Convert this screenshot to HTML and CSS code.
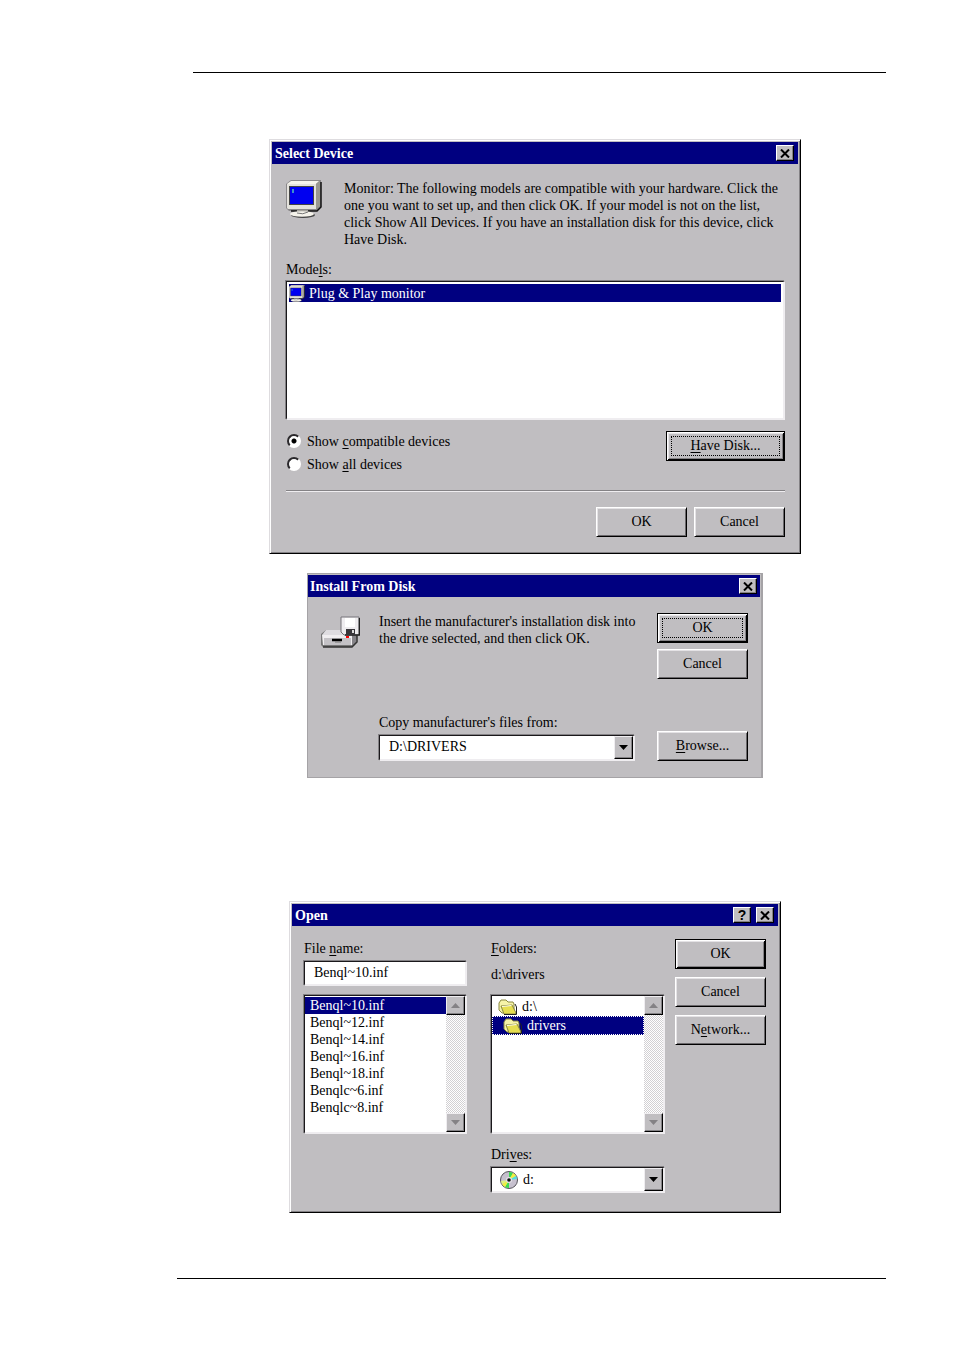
FILE: index.html
```html
<!DOCTYPE html>
<html lang="en">

<head>
    <meta charset="UTF-8">
    <meta name="viewport" content="width=device-width, initial-scale=1">
    <title>Installing the monitor driver</title>
    <link rel="stylesheet" href="styles.css">
</head>

<body>
    <!-- shared icon shapes -->
    <svg class="sprite" aria-hidden="true">
        <symbol id="icon-monitor" viewBox="0 0 36 38">
            <path d="M5 0H35V27L31 31H3L0 28V4Z" fill="#8a888a"/>
            <path d="M5 1H33L30 4H1Z" fill="#f6f4ec"/>
            <path d="M30 4L34 1V26L30 29Z" fill="#9a9890"/>
            <path d="M35 2V27L31 31H5" fill="none" stroke="#111" stroke-width="1.5"/>
            <path d="M1 4H30V29H2L1 28Z" fill="#e4e2dc"/>
            <path d="M3 6H28V25H3Z" fill="#444"/>
            <path d="M4 7H27V24H4Z" fill="#0000f0"/>
            <path d="M7 9V13" stroke="#4fc0c0" stroke-width="1.5"/>
            <path d="M11 30H22V33H11Z" fill="#a4a29c"/>
            <ellipse cx="17" cy="35" rx="12" ry="3" fill="#444"/>
            <ellipse cx="16" cy="34" rx="12" ry="2.8" fill="#f4f2ea"/>
            <path d="M11 33Q17 35 22 32" fill="none" stroke="#777"/>
        </symbol>
        <symbol id="icon-close" viewBox="0 0 10 9">
            <path d="M1 0.5L9 8.5M9 0.5L1 8.5" stroke="#000" stroke-width="2"/>
        </symbol>
        <symbol id="icon-down" viewBox="0 0 9 5">
            <path d="M0 0H9L4.5 5Z" fill="currentColor"/>
        </symbol>
        <symbol id="icon-up" viewBox="0 0 9 5">
            <path d="M0 5H9L4.5 0Z" fill="currentColor"/>
        </symbol>
        <symbol id="icon-folder" viewBox="0 0 20 16">
            <path d="M1 4L3 1H8L10 3H15L16 5V14H4L1 11Z" fill="#f6f3a8" stroke="#8a8840"/>
            <path d="M3 7L14 6L18 14L17 15H6Z" fill="#e6de50" stroke="#8a8840"/>
            <path d="M4 7.5L13.500 6.500" stroke="#fffff0"/>
            <path d="M17 5L18.500 8V15.500H6" fill="none" stroke="#222"/>
        </symbol>
    </svg>

    <header class="page-rule page-rule-top"></header>

    <main class="page">
        <section class="dialog dialog-device" aria-labelledby="deviceTitle">
            <div class="title-bar">
                <h2 id="deviceTitle">Select Device</h2>
                <button class="caption-button" type="button" aria-label="Close"><svg><use href="#icon-close"/></svg></button>
            </div>
            <form class="dialog-body device-body">
                <div class="intro">
                    <svg class="monitor-icon"><use href="#icon-monitor"/></svg>
                    <p>Monitor: The following models are compatible with your hardware. Click the one you want to set up, and then click OK. If your model is not on the list, click Show All Devices. If you have an installation disk for this device, click Have Disk.</p>
                </div>
                <div class="field">
                    <span class="label" id="modelsLabel">Mode<u>l</u>s:</span>
                    <ul class="list-box sunken" role="listbox" aria-labelledby="modelsLabel">
                        <li class="model selected" role="option" aria-selected="true">
                            <svg class="small-monitor"><use href="#icon-monitor"/></svg>Plug &amp; Play monitor
                        </li>
                    </ul>
                </div>
                <div class="choices">
                    <div class="radios">
                        <label><input type="radio" name="show" checked>Show <u>c</u>ompatible devices</label>
                        <label><input type="radio" name="show">Show <u>a</u>ll devices</label>
                    </div>
                    <button class="button default focused wide" type="button"><u>H</u>ave Disk...</button>
                </div>
                <hr class="divider">
                <div class="button-row">
                    <button class="button" type="button">OK</button>
                    <button class="button" type="button">Cancel</button>
                </div>
            </form>
        </section>

        <section class="dialog dialog-install" aria-labelledby="installTitle">
            <div class="title-bar">
                <h2 id="installTitle">Install From Disk</h2>
                <button class="caption-button" type="button" aria-label="Close"><svg><use href="#icon-close"/></svg></button>
            </div>
            <form class="dialog-body install-body">
                <svg class="drive-icon" viewBox="0 0 39 32">
                    <path d="M5 14H37L35 27L31 31H2L0 29V18Z" fill="#777"/>
                    <path d="M5 14H32L29 19H1Z" fill="#dedce0"/>
                    <path d="M1 19H31V29H2Z" fill="#f0eef0"/>
                    <path d="M3 22H30V29H3Z" fill="#c4c2c6"/>
                    <path d="M31 19L35 15V26L31 30Z" fill="#858388"/>
                    <path d="M2 31H31L36 26V18" fill="none" stroke="#333" stroke-width="1.5"/>
                    <path d="M11 24H21" stroke="#000" stroke-width="2.500"/>
                    <path d="M14 26H20" stroke="#777"/>
                    <path d="M21 1H38V19H23L20 16V1Z" fill="#eeecef" stroke="#77757a"/>
                    <path d="M38.500 2V19H24" fill="none" stroke="#222" stroke-width="1.500"/>
                    <path d="M24 2H34V11H24Z" fill="#fff"/>
                    <path d="M25 13H34V19H25Z" fill="#38363a"/>
                    <path d="M31 14H33V17H31Z" fill="#ddd"/>
                    <path d="M25 20H28V22H25Z" fill="#f00"/>
                </svg>
                <div class="install-main">
                    <p>Insert the manufacturer's installation disk into the drive selected, and then click OK.</p>
                    <div class="field">
                        <label class="label" for="copyFrom">Copy manufacturer's files from:</label>
                        <div class="combo sunken">
                            <select id="copyFrom"><option>D:\DRIVERS</option></select>
                            <span class="arrow"><svg><use href="#icon-down"/></svg></span>
                        </div>
                    </div>
                </div>
                <div class="button-column">
                    <button class="button default focused" type="button">OK</button>
                    <button class="button" type="button">Cancel</button>
                    <button class="button last" type="button"><u>B</u>rowse...</button>
                </div>
            </form>
        </section>

        <section class="dialog dialog-open" aria-labelledby="openTitle">
            <div class="title-bar">
                <h2 id="openTitle">Open</h2>
                <button class="caption-button help" type="button" aria-label="Help">?</button>
                <button class="caption-button" type="button" aria-label="Close"><svg><use href="#icon-close"/></svg></button>
            </div>
            <form class="dialog-body open-body">
                <div class="file-column">
                    <label class="label" for="fileName">File <u>n</u>ame:</label>
                    <input class="text-box sunken" id="fileName" type="text" value="Benql~10.inf">
                    <div class="scroll-list sunken">
                        <ul role="listbox" aria-label="Files">
                            <li class="selected" role="option" aria-selected="true">Benql~10.inf</li>
                            <li role="option">Benql~12.inf</li>
                            <li role="option">Benql~14.inf</li>
                            <li role="option">Benql~16.inf</li>
                            <li role="option">Benql~18.inf</li>
                            <li role="option">Benqlc~6.inf</li>
                            <li role="option">Benqlc~8.inf</li>
                        </ul>
                        <div class="scrollbar">
                            <button class="arrow" type="button" aria-label="Scroll up" disabled><svg><use href="#icon-up"/></svg></button>
                            <button class="arrow" type="button" aria-label="Scroll down" disabled><svg><use href="#icon-down"/></svg></button>
                        </div>
                    </div>
                </div>
                <div class="folder-column">
                    <span class="label" id="foldersLabel"><u>F</u>olders:</span>
                    <span class="label current-folder">d:\drivers</span>
                    <div class="scroll-list sunken">
                        <ul class="folders" role="listbox" aria-labelledby="foldersLabel">
                            <li role="option"><svg><use href="#icon-folder"/></svg>d:\</li>
                            <li class="selected nested" role="option" aria-selected="true"><svg><use href="#icon-folder"/></svg>drivers</li>
                        </ul>
                        <div class="scrollbar">
                            <button class="arrow" type="button" aria-label="Scroll up" disabled><svg><use href="#icon-up"/></svg></button>
                            <button class="arrow" type="button" aria-label="Scroll down" disabled><svg><use href="#icon-down"/></svg></button>
                        </div>
                    </div>
                    <label class="label drives-label" for="drives">Dri<u>v</u>es:</label>
                    <div class="combo sunken">
                        <svg class="disc-icon" viewBox="0 0 18 18">
                            <circle cx="9" cy="9" r="8.500" fill="#c6c0ce" stroke="#55535a"/>
                            <path d="M9 9L9 1A8 8 0 0 1 13 2Z" fill="#3cdc50"/>
                            <path d="M9 9L13 2A8 8 0 0 1 16 5Z" fill="#f0f040"/>
                            <path d="M9 9L16 5A8 8 0 0 1 17 8Z" fill="#50e0e0"/>
                            <path d="M9 9L9 17A8 8 0 0 1 5 16Z" fill="#3cdc50"/>
                            <path d="M9 9L5 16A8 8 0 0 1 2 13Z" fill="#f0f040"/>
                            <path d="M9 9L2 13A8 8 0 0 1 1 10Z" fill="#dff080"/>
                            <circle cx="9" cy="9" r="3" fill="#e4e0e8"/>
                            <circle cx="9" cy="9" r="1.800" fill="#111"/>
                        </svg>
                        <select id="drives"><option>d:</option></select>
                        <span class="arrow"><svg><use href="#icon-down"/></svg></span>
                    </div>
                </div>
                <div class="button-column">
                    <button class="button default" type="button">OK</button>
                    <button class="button" type="button">Cancel</button>
                    <button class="button" type="button">N<u>e</u>twork...</button>
                </div>
            </form>
        </section>
    </main>

    <footer class="page-rule page-rule-bottom"></footer>
</body>

</html>
```
FILE: styles.css
```css
* {
    box-sizing: border-box;
}

body {
    margin: 0;
    padding: 72px 68px 70px 177px;
    background: #fff;
    color: #000;
    font: 14px/17px "Liberation Serif", "Times New Roman", serif;
}

h2,
p,
ul {
    margin: 0;
    padding: 0;
}

ul {
    list-style: none;
}

u {
    text-underline-offset: 2px;
}

button,
input,
select {
    font: inherit;
    color: inherit;
}

.sprite {
    display: none;
}

.page-rule {
    border-top: 1px solid #000;
}

.page-rule-top {
    margin-left: 16px;
}

.page {
    display: flex;
    flex-direction: column;
    align-items: center;
    padding: 66px 0 65px 7px;
}

/* Windows */
.dialog {
    width: 100%;
    background: #c0bec1;
    border: 1px solid #dedcdf;
    border-right-color: #000;
    border-bottom-color: #000;
    box-shadow: inset 1px 1px #fff, inset -1px -1px #848285;
    padding: 2px;
}

.dialog-device {
    max-width: 532px;
}

.dialog-install {
    max-width: 456px;
    margin-top: 19px;
    padding: 1px 2px 1px 0;
    border-color: #a5a3a6;
    box-shadow: inset -1px 0 #a5a3a6;
}

.dialog-open {
    max-width: 492px;
    margin-top: 123px;
}

.title-bar {
    display: flex;
    align-items: center;
    gap: 5px;
    height: 22px;
    padding: 0 4px 0 3px;
    background: #000080;
    color: #fff;
}

.title-bar h2 {
    flex: 1;
    font-size: 14px;
    line-height: 17px;
}

.dialog-install .title-bar {
    padding: 0 3px 0 2px;
}

.caption-button {
    display: flex;
    align-items: center;
    justify-content: center;
    width: 18px;
    height: 16px;
    padding: 0;
    background: #c0bec1;
    border: 1px solid #fff;
    border-right-color: #000;
    border-bottom-color: #000;
    box-shadow: inset -1px -1px #848285;
    color: #000;
}

.caption-button svg {
    width: 10px;
    height: 9px;
}

.caption-button.help {
    font: bold 14px/14px "Liberation Sans", Arial, sans-serif;
}

/* Controls */
.label {
    display: block;
}

.sunken {
    background: #fff;
    border: 1px solid #1a181b;
    border-right: 2px solid #efedf0;
    border-bottom: 2px solid #efedf0;
    box-shadow: -1px -1px #848285;
}

.button {
    width: 91px;
    height: 30px;
    padding: 0 0 2px;
    background: #c0bec1;
    border: 1px solid #fff;
    border-right-color: #000;
    border-bottom-color: #000;
    box-shadow: inset 1px 1px #e4e2e5, inset -1px -1px #6a686b;
}

.button.wide {
    width: 119px;
}

.button.default {
    border-color: #000;
    box-shadow: inset 1px 1px #fff, inset -1px -1px #000, inset 2px 2px #e4e2e5, inset -2px -2px #848285;
}

.button.focused {
    outline: 1px dotted #000;
    outline-offset: -6px;
}

.selected {
    background: #000080;
    color: #fff;
}

.arrow {
    display: flex;
    align-items: center;
    justify-content: center;
    width: 19px;
    padding: 0;
    background: #c0bec1;
    border: 1px solid #efedf0;
    border-right-color: #000;
    border-bottom-color: #000;
    box-shadow: inset -1px -1px #848285;
    color: #000;
}

.arrow svg {
    width: 9px;
    height: 5px;
}

.arrow:disabled {
    color: #848285;
}

.combo {
    position: relative;
    display: flex;
    height: 26px;
}

.combo select {
    flex: 1;
    appearance: none;
    padding: 0 27px 3px 9px;
    background: transparent;
    border: 0;
    border-radius: 0;
}

.combo .arrow {
    position: absolute;
    top: 0;
    right: 0;
    bottom: 0;
    pointer-events: none;
}

/* Select Device */
.device-body {
    padding: 16px 13px 14px 14px;
}

.intro {
    display: flex;
    gap: 22px;
}

.monitor-icon {
    flex: none;
    width: 36px;
    height: 38px;
}

.device-body .field {
    margin-top: 13px;
}

.list-box {
    height: 139px;
    margin-top: 3px;
    padding: 2px;
}

.model {
    display: flex;
    align-items: center;
    gap: 4px;
    height: 18px;
}

.small-monitor {
    width: 16px;
    height: 17px;
}

.choices {
    display: flex;
    justify-content: space-between;
    margin-top: 11px;
}

.radios {
    display: flex;
    flex-direction: column;
    gap: 6px;
    padding: 2px 1px;
}

.radios label {
    display: flex;
    white-space: pre;
}

.radios input {
    appearance: none;
    width: 14px;
    height: 14px;
    margin: 1px 6px 0 0;
    background: #fff;
    border: 2px solid #2a282b;
    border-right-color: #fff;
    border-bottom-color: #fff;
    border-radius: 50%;
}

.radios input:checked {
    background: radial-gradient(circle, #000 2px, #fff 3px);
}

.divider {
    height: 2px;
    margin: 15px 0;
    border: 0;
    border-top: 1px solid #848285;
    border-bottom: 1px solid #efedf0;
}

.button-row {
    display: flex;
    justify-content: flex-end;
    gap: 7px;
}

/* Install From Disk */
.install-body {
    display: flex;
    padding: 16px 12px 15px 13px;
}

.drive-icon {
    flex: none;
    width: 39px;
    height: 32px;
    margin: 3px 19px 0 0;
}

.install-main {
    display: flex;
    flex: 1;
    flex-direction: column;
    justify-content: space-between;
}

.install-main p {
    margin-right: 10px;
}

.install-main .field {
    margin-right: 22px;
}

.install-main .combo {
    margin-top: 4px;
}

.button-column {
    display: flex;
    flex-direction: column;
    gap: 6px;
}

.button-column .last {
    margin-top: 46px;
}

/* Open */
.open-body {
    display: flex;
    padding: 13px 12px 17px 12px;
}

.file-column {
    flex: 1;
    padding-top: 1px;
}

.folder-column {
    width: 174px;
    margin: 0 10px 0 24px;
    padding-top: 1px;
}

.text-box {
    display: block;
    width: 100%;
    height: 25px;
    margin-top: 4px;
    padding: 0 9px;
}

.scroll-list {
    display: flex;
    height: 139px;
    margin-top: 9px;
}

.scroll-list ul {
    flex: 1;
    padding-top: 1px;
}

.file-column li {
    padding-left: 5px;
}

.scrollbar {
    display: flex;
    flex-direction: column;
    justify-content: space-between;
    width: 19px;
    background: repeating-conic-gradient(#fff 0 25%, #d2d0d3 0 50%) 0 0 / 2px 2px;
}

.scrollbar .arrow {
    height: 19px;
}

.current-folder {
    margin-top: 9px;
}

.folder-column .scroll-list {
    margin-top: 12px;
}

.folders li {
    display: flex;
    align-items: center;
    gap: 4px;
    height: 19px;
    padding-left: 6px;
}

.folders li.nested {
    padding-left: 11px;
    outline: 1px dotted #fff;
    outline-offset: -1px;
}

.folders svg {
    width: 20px;
    height: 16px;
}

.drives-label {
    margin: 12px 0 4px;
}

.folder-column .combo {
    align-items: center;
}

.disc-icon {
    width: 18px;
    height: 18px;
    margin-left: 8px;
}

.folder-column .combo select {
    padding: 0 27px 0 5px;
}

.open-body .button-column {
    gap: 8px;
}
```
